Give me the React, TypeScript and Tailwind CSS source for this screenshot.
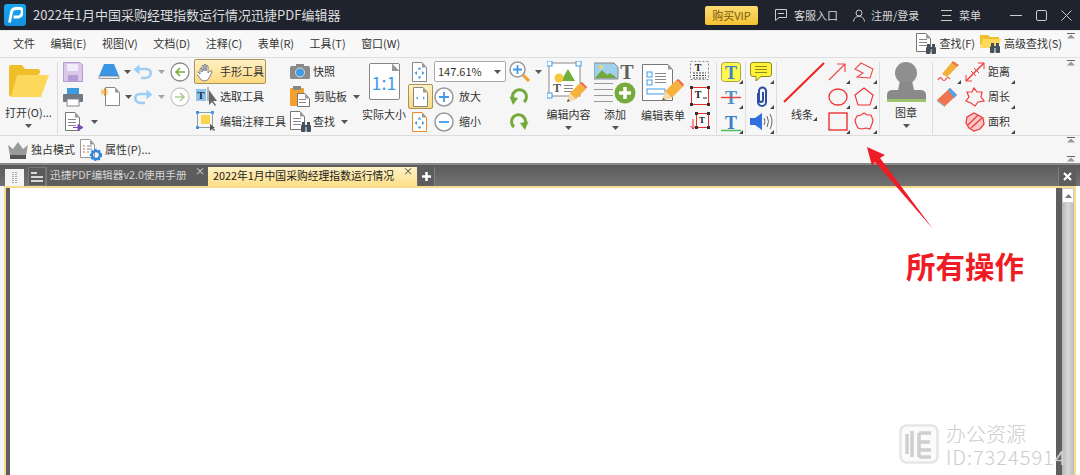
import React from "react";

const font = { fontFamily: '"Noto Sans CJK SC","Noto Sans",sans-serif' };

const Svg = ({ w, h, children, className = "" }: { w: number; h: number; children: React.ReactNode; className?: string }) => (
  <svg width={w} height={h} viewBox={`0 0 ${w} ${h}`} className={"shrink-0 " + className}>{children}</svg>
);

const Caret = ({ className = "" }: { className?: string }) => (
  <svg width="7" height="4" viewBox="0 0 7 4" className={"shrink-0 " + className}><path d="M0 0h7L3.5 4z" fill="#555" /></svg>
);
const Corner = () => (
  <svg width="4" height="4" viewBox="0 0 4 4" className="absolute right-0 bottom-0"><path d="M4 0v4H0z" fill="#444" /></svg>
);
const Sep = () => <div className="w-px h-[72px] mt-[3px] bg-[#dcdcdc] shrink-0" />;
const Row = ({ children, className = "" }: { children?: React.ReactNode; className?: string }) => (
  <div className={"h-[25px] flex items-center shrink-0 " + className}>{children}</div>
);
const Collapse = ({ className }: { className: string }) => (
  <svg width="8" height="6" viewBox="0 0 8 6" className={"absolute " + className}><path d="M0 0.5h8" stroke="#666" /><path d="M4 1.5L8 5.5H0z" fill="#999" /></svg>
);

const Pencil = ({ x, y, s = 1 }: { x: number; y: number; s?: number }) => (
  <g transform={`translate(${x} ${y}) scale(${s})`}>
    <path d="M0 20l3-9L13 1l6 6L9 17z" fill="#f7b23c" />
    <path d="M13 1l2-1 5 5-1 2z" fill="#ee6b4a" />
    <path d="M0 20l3-9 6 6z" fill="#f5d9b0" />
    <path d="M0 20l1-3 2 2z" fill="#555" />
  </g>
);
const Doc = ({ x = 0, y = 0, w = 15, h = 20, fill = "#fff", stroke = "#777" }: any) => (
  <g transform={`translate(${x} ${y})`}>
    <path d={`M.5 .5H${w - 5}L${w - .5} 5.5V${h - .5}H.5z`} fill={fill} stroke={stroke} />
    <path d={`M${w - 5} .5V5.5H${w - .5}z`} fill="#999" />
  </g>
);
const Lines = ({ x, y, n = 4, w = 9, gap = 3, c = "#888" }: any) => (
  <g>{Array.from({ length: n }).map((_, i) => <rect key={i} x={x} y={y + i * gap} width={w} height="1" fill={c} />)}</g>
);
const Binoc = ({ x, y }: { x: number; y: number }) => (
  <g transform={`translate(${x} ${y})`} fill="#44505c">
    <rect x="0" y="3" width="4.5" height="7" rx="1" /><rect x="5.5" y="3" width="4.5" height="7" rx="1" /><rect x="1" y="0" width="3" height="4" /><rect x="6" y="0" width="3" height="4" /><rect x="4" y="3" width="2" height="2" />
  </g>
);
const Circ = ({ sign, w = 20, c = "#3f9be8" }: { sign: "+" | "-"; w?: number; c?: string }) => (
  <Svg w={w} h={w}>
    <circle cx={w / 2} cy={w / 2} r={w / 2 - 1} fill="#fff" stroke="#9a9a9a" strokeWidth="1.5" />
    <path d={sign === "+" ? `M${w / 2} 5V${w - 5}M5 ${w / 2}H${w - 5}` : `M5 ${w / 2}H${w - 5}`} stroke={c} strokeWidth="1.8" />
  </Svg>
);
const ArrowCirc = ({ dir, dim }: { dir: "l" | "r"; dim?: boolean }) => (
  <Svg w={20} h={20}>
    <circle cx="10" cy="10" r="9" fill="#fff" stroke={dim ? "#c8c8c8" : "#8a8a8a"} strokeWidth="1.3" />
    <path d={dir === "l" ? "M15 10H6M10 6l-4 4 4 4" : "M5 10h9M10 6l4 4-4 4"} fill="none" stroke={dim ? "#a9cf8e" : "#6fae3c"} strokeWidth="1.6" />
  </Svg>
);
const Curve = ({ flip }: { flip?: boolean }) => (
  <Svg w={20} h={16} className={flip ? "-scale-x-100" : ""}>
    <path d="M5 5H13C20 5 19 14 12 14H8" fill="none" stroke="#9ccdf4" strokeWidth="2.6" />
    <path d="M0.5 5.5L6.5 0.5V10.5z" fill="#9ccdf4" />
  </Svg>
);
const Rotate = ({ flip }: { flip?: boolean }) => (
  <Svg w={20} h={20} className={flip ? "-scale-x-100" : ""}>
    <path d="M5 14A7 7 0 1 1 15 15" fill="none" stroke="#74aa3a" strokeWidth="3" />
    <path d="M0.5 9.5L9 11 4 18z" fill="#74aa3a" />
  </Svg>
);
const FitDoc = ({ orange, dots = 4 }: { orange?: boolean; dots?: number }) => (
  <Svg w={15} h={20}>
    <Doc w={15} h={20} stroke={orange ? "#e98a20" : "#888"} fill="#fff" />
    {dots === 2 ? <path d="M3 11l2-1.500v3zM12 11l-2-1.500v3z" fill="#3f9be8" /> : <path d="M7.500 5l-2 2.500h4zM7.500 17l-2-2.500h4zM2.500 11l2.500-2v4zM12.500 11l-2.500-2v4z" fill="#3f9be8" />}
  </Svg>
);
const TBig = ({ c = "#3a7fc8" }: { c?: string }) => (
  <text x="10" y="16.500" textAnchor="middle" fontSize="18" fontWeight="700" fontFamily="Liberation Serif, serif" fill={c}>T</text>
);
const Handle = ({ x, y, s = 3 }: any) => <rect x={x} y={y} width={s} height={s} fill="#333" />;

const T = ({ children, className = "" }: { children: React.ReactNode; className?: string }) => (
  <span className={"text-[11px] leading-none text-[#333] whitespace-nowrap " + className}>{children}</span>
);

function TitleBar() {
  return (
    <div className="h-[30px] bg-[#1f232d] flex items-center shrink-0 text-[#d8d8d8] text-[11px]">
      <div className="ml-[4px] w-[22px] h-[22px] rounded-[3px] bg-gradient-to-b from-[#16a9ee] to-[#1690e0] flex items-center justify-center">
        <Svg w={16} h={17}><path d="M2.500 15.500L4.500 5C5 2.500 6.500 1.500 9 1.500H13C15.500 1.500 15.500 4 15 6C14.500 8.500 13 10 10.500 10H6.500" fill="none" stroke="#fff" strokeWidth="2.800" /></Svg>
      </div>
      <span className="ml-[7px] text-[13px] text-[#dcdcdc] whitespace-nowrap">2022年1月中国采购经理指数运行情况迅捷PDF编辑器</span>
      <div className="ml-auto w-[53px] h-[19px] rounded-[2px] bg-gradient-to-b from-[#fbdc70] to-[#f5c22f] text-[#7a5a10] flex items-center justify-center">购买VIP</div>
      <Svg w={12} h={12} className="ml-[17px]"><path d="M.5 .5h11v8H4l-3.500 3z" fill="none" stroke="#ccc" /><path d="M3 4.500h6" stroke="#ccc" /></Svg>
      <span className="ml-[7px] w-[59px]">客服入口</span>
      <Svg w={12} h={13}><circle cx="6" cy="4" r="3" fill="none" stroke="#ccc" /><path d="M.5 12.500C1 8.500 3.500 7.500 6 7.500s5 1 5.500 5" fill="none" stroke="#ccc" /></Svg>
      <span className="ml-[6px] w-[70px]">注册/登录</span>
      <Svg w={11} h={11}><path d="M0 .5h11M1 5.500h9M0 10.500h11" stroke="#ccc" /></Svg>
      <span className="ml-[7px] w-[51px]">菜单</span>
      <Svg w={12} h={12}><path d="M0 6.500h12" stroke="#ccc" /></Svg>
      <Svg w={11} h={11} className="ml-[14px]"><rect x=".5" y=".5" width="10" height="10" rx="1.500" fill="none" stroke="#ccc" /></Svg>
      <Svg w={11} h={11} className="ml-[14px] mr-[8px]"><path d="M.5 .5l10 10M10.500 .5l-10 10" stroke="#ccc" /></Svg>
    </div>
  );
}

function MenuBar() {
  return (
    <div className="h-[28px] shrink-0 flex items-center bg-[#f8f8f8] border-b border-[#dedede] border-t border-t-[#e8e8e8] pl-[13px] pb-[2px] gap-[15.500px]">
      {["文件", "编辑(E)", "视图(V)", "文档(D)", "注释(C)", "表单(R)", "工具(T)", "窗口(W)"].map((m) => <T key={m}>{m}</T>)}
      <Svg w={20} h={21} className="ml-auto -mr-[12.500px]">
        <Doc w={15} h={19} /><Lines x={3} y={6} n={3} w={8} /><Binoc x={10} y={11} />
      </Svg>
      <T className="text-[10.500px] -mr-[10.500px]">查找(F)</T>
      <Svg w={21} h={20} className="-mr-[12.500px]">
        <path d="M0 2h8l2 2h9v8H0z" fill="#efc02c" /><path d="M0 15L3 6h18l-3 9z" fill="#fdd95b" /><Binoc x={10} y={10} />
      </Svg>
      <T className="text-[10.500px] mr-[18px]">高级查找(S)</T>
    </div>
  );
}

function Ribbon() {
  return (
    <div className="h-[78px] shrink-0 flex pt-[1px] bg-[#f6f6f6] border-b border-[#dcdcdc]">
      <div className="w-[57px] shrink-0 flex flex-col items-center">
        <Svg w={41} h={33} className="mt-[6px]">
          <path d="M1 2Q1 0 3 0H14l3 4H30q2 0 2 2V8L8 30 3 32 1 30z" fill="#efbe2a" />
          <path d="M9 10H41L33 32H3z" fill="#fdd95b" />
        </Svg>
        <T className="mt-[9px]">打开(O)...</T>
        <Caret className="mt-[6px]" />
      </div>
      <Sep />
      <div className="w-[38px] shrink-0 pl-[5px]">
        <Row><Svg w={20} h={20}><path d="M.5 .5H17L19.500 3V19.500H.5z" fill="#d9c8ea" stroke="#b79bd6" /><rect x="4" y="2" width="11" height="7" fill="#f2ecf8" /><rect x="5" y="13" width="10" height="6" fill="#b79bd6" /></Svg></Row>
        <Row><Svg w={20} h={20}><rect x="4" y="1" width="12" height="6" fill="#3d9be0" /><rect x="0" y="7" width="20" height="8" rx="1" fill="#6f7a84" /><rect x="4" y="12" width="12" height="7" fill="#fff" stroke="#888" /></Svg></Row>
        <Row className="gap-[6px] pl-[2px]">
          <Svg w={20} h={20}><Doc w={15} h={19} /><Lines x={3} y={7} n={3} w={8} /><path d="M8 15.500h8M13 12.500l5 3-5 3z" fill="#7d4bb8" stroke="#7d4bb8" /></Svg>
          <Caret />
        </Row>
      </div>
      <div className="w-[37px] shrink-0 pl-[2px]">
        <Row className="gap-[4px]"><Svg w={22} h={17}><path d="M6 1H16L21 13H1z" fill="#3b97e6" /><path d="M1 13H21V15.500H1z" fill="#e2edf7" stroke="#666" strokeWidth=".6" /></Svg><Caret /></Row>
        <Row className="gap-[5px] pl-[2px]"><Svg w={20} h={19} className=""><Doc x={5} w={15} h={19} stroke="#888" /><path d="M4.500 1v8M.5 5h8M1.500 2l6 6M7.500 2l-6 6" stroke="#f2a22c" /></Svg><Caret /></Row>
      </div>
      <div className="w-[35px] shrink-0">
        <Row className="gap-[5px]"><Curve /><Caret className="opacity-50" /></Row>
        <Row className="gap-[5px]"><Curve flip /><Caret className="opacity-50" /></Row>
      </div>
      <div className="w-[26px] shrink-0 pl-[2px]">
        <Row><ArrowCirc dir="l" /></Row>
        <Row><ArrowCirc dir="r" dim /></Row>
      </div>
      <div className="w-[94px] shrink-0">
        <Row className="w-[72px] h-[25px] -mb-[1px] rounded-[2px] border border-[#a8935a] bg-gradient-to-b from-[#fff0c4] to-[#fbd97e] pl-[2px]">
          <Svg w={18} h={20}><path d="M3 12V7q1-2 2 0v3V4q1-2 2 0v5V3q1-2 2 0v6V4q1-2 2 0v7l2-2q2-1 2 1l-3 6q-1 3-5 3-3 0-5-4l-3-4q0-2 2-1z" fill="#fff" stroke="#777" strokeWidth=".9" /></Svg>
          <T className="ml-[5px]">手形工具</T>
        </Row>
        <Row className="mt-[1px] pl-[2px]">
          <Svg w={21} h={21}><rect x="0" y="3" width="10" height="12" fill="#8ec5f0" /><text x="5" y="13" textAnchor="middle" fontSize="11" fontWeight="700" fontFamily="Liberation Serif, serif" fill="#234">T</text><path d="M12 1v14" stroke="#777" /><path d="M13 4V19l3-3 3 4 1-1-3-4h4z" fill="#666" /></Svg>
          <T className="ml-[3px]">选取工具</T>
        </Row>
        <Row className="pl-[2px]">
          <Svg w={20} h={21}><rect x="1.500" y="1.500" width="15" height="15" fill="none" stroke="#999" /><rect x="5" y="4" width="9" height="9" fill="#fbd34c" /><rect x="0" y="0" width="3" height="3" fill="#3f9be8" /><rect x="15" y="0" width="3" height="3" fill="#3f9be8" /><rect x="0" y="15" width="3" height="3" fill="#3f9be8" /><path d="M14 13v7l2-2 2 2 1-1-2-2h2z" fill="#555" /></Svg>
          <T className="ml-[4px] text-[10.800px]">编辑注释工具</T>
        </Row>
      </div>
      <div className="w-[72px] shrink-0 pl-[2px]">
        <Row><Svg w={20} h={15}><rect x="0" y="2" width="20" height="13" rx="1.500" fill="#8a8a8a" /><rect x="6" y="0" width="8" height="3" fill="#8a8a8a" /><circle cx="10" cy="8.500" r="4.500" fill="#3f9be8" stroke="#ddd" /></Svg><T className="ml-[3px]">快照</T></Row>
        <Row><Svg w={21} h={21}><rect x="0" y="2" width="14" height="18" rx="1" fill="#f59f2d" /><rect x="3" y="0" width="8" height="4" fill="#888" /><Doc x={7} y={7} w={13} h={14} /><Lines x={9} y={13} n={2} w={7} /></Svg><T className="ml-[3px]">剪贴板</T><Caret className="ml-[6px]" /></Row>
        <Row><Svg w={21} h={21}><Doc w={15} h={19} /><Lines x={3} y={7} n={3} w={8} /><Binoc x={11} y={11} /></Svg><T className="ml-[2px]">查找</T><Caret className="ml-[6px]" /></Row>
      </div>
      <div className="w-[48px] shrink-0 flex flex-col items-center">
        <div className="w-[31px] h-[37px] mt-[4px] bg-white border-[1.500px] border-[#888] rounded-[2px] relative flex items-center justify-center text-[#3f9be8] text-[18px] leading-none">
          1:1
          <div className="absolute top-[-1px] right-[-1px] w-[8px] h-[8px] bg-[#999] [clip-path:polygon(0_0,100%_100%,0_100%)]" />
        </div>
        <T className="mt-[9px]">实际大小</T>
      </div>
      <div className="w-[24px] shrink-0 pl-[2px] relative">
        <Row className="pl-[2px]"><FitDoc /></Row>
        <Row className="w-[25px] h-[25px] -ml-[2px] justify-center rounded-[2px] border border-[#a8935a] bg-gradient-to-b from-[#fff0c4] to-[#fbd97e]"><FitDoc dots={2} /></Row>
        <Row className="pl-[2px]"><FitDoc orange /></Row>
      </div>
      <div className="w-[74px] shrink-0 pl-[2px]">
        <Row>
          <div className="w-[72px] h-[21px] bg-white border border-[#aaa] rounded-[2px] flex items-center pl-[3px] pr-[4px]">
            <span className="text-[11px] text-[#333]">147.61%</span><Caret className="ml-auto" />
          </div>
        </Row>
        <Row><Circ sign="+" /><T className="ml-[5px]">放大</T></Row>
        <Row><Circ sign="-" /><T className="ml-[5px]">缩小</T></Row>
      </div>
      <div className="w-[39px] shrink-0 pl-[3px]">
        <Row className="gap-[4px]">
          <Svg w={22} h={22}><circle cx="8.500" cy="8.500" r="7.500" fill="#fff" stroke="#999" strokeWidth="1.500" /><path d="M8.500 4v9M4 8.500h9" stroke="#3f9be8" strokeWidth="1.800" /><path d="M14 14l6 6" stroke="#f2a22c" strokeWidth="3" /></Svg>
          <Caret />
        </Row>
        <Row><Rotate /></Row>
        <Row><Rotate flip /></Row>
      </div>
      <div className="w-[47px] shrink-0 flex flex-col items-center">
        <Svg w={43} h={45} className="mt-[2px]">
          <rect x="2" y="2" width="31" height="33" fill="#fff" stroke="#888" />
          <path d="M18 20l7-12 7 12z" fill="#6fae3c" transform="translate(-4 0)" /><circle cx="12" cy="17" r="4.500" fill="#f5c93e" />
          <text x="10" y="31" textAnchor="middle" fontSize="12" fontWeight="700" fontFamily="Liberation Serif, serif" fill="#555">T</text>
          <Lines x={17} y={24} n={3} w={9} gap={3} />
          <rect x="0" y="0" width="5" height="5" fill="#fff" stroke="#3f9be8" /><rect x="29" y="0" width="5" height="5" fill="#fff" stroke="#3f9be8" /><rect x="0" y="32" width="5" height="5" fill="#fff" stroke="#3f9be8" />
          <Pencil x={20} y={21} />
        </Svg>
        <T className="mt-[3px]">编辑内容</T>
        <Caret className="mt-[6px]" />
      </div>
      <div className="w-[46px] shrink-0 flex flex-col items-center">
        <Svg w={42} h={45} className="mt-[2px]">
          <path d="M0 2H20L24 6V18H0z" fill="#9fd0ec" stroke="#888" /><path d="M1 17l7-8 5 5 3-2 7 5z" fill="#74a83c" /><circle cx="7" cy="6" r="2" fill="#f5d76a" />
          <text x="33" y="18" textAnchor="middle" fontSize="20" fontWeight="700" fontFamily="Liberation Serif, serif" fill="#5f5f5f">T</text>
          <Lines x={0} y={22} n={4} w={19} gap={6} c="#999" />
          <circle cx="31" cy="32" r="10.500" fill="#74ab3b" /><path d="M31 26v12M25 32h12" stroke="#fff" strokeWidth="3.500" />
        </Svg>
        <T className="mt-[3px]">添加</T>
        <Caret className="mt-[6px]" />
      </div>
      <div className="w-[50px] shrink-0 flex flex-col items-center">
        <Svg w={43} h={39} className="mt-[5px]">
          <Doc x={0} y={0} w={31} h={37} />
          <rect x="5" y="8" width="5" height="5" fill="none" stroke="#3f9be8" /><rect x="5" y="16" width="5" height="5" fill="none" stroke="#3f9be8" /><Lines x={13} y={9} n={4} w={11} gap={3} /><rect x="5" y="25" width="18" height="5" fill="#fff" stroke="#3f9be8" />
          <Pencil x={20} y={15} s={1.100} />
        </Svg>
        <T className="mt-[7px]">编辑表单</T>
      </div>
      <div className="w-[28px] shrink-0 pl-[2px]">
        <Row><Svg w={20} h={21}><rect x=".5" y=".5" width="18" height="18" fill="none" stroke="#888" strokeDasharray="2 2" /><text x="8" y="10" textAnchor="middle" fontSize="10" fontWeight="700" fontFamily="Liberation Serif, serif" fill="#222">T</text><path d="M3 12h13M3 14.500h13M3 17h13" stroke="#444" strokeDasharray="2 1" /></Svg></Row>
        <Row><Svg w={20} h={21}><rect x="1.500" y="1.500" width="17" height="17" fill="#fff" stroke="#ee2b2b" /><text x="8" y="12" textAnchor="middle" fontSize="10" fontWeight="700" fontFamily="Liberation Serif, serif" fill="#222">T</text><path d="M13 12h4" stroke="#222" /><Handle x={0} y={0} /><Handle x={17} y={0} /><Handle x={0} y={17} /><Handle x={17} y={17} /></Svg></Row>
        <Row><Svg w={20} h={21}><rect x="6.500" y="2.500" width="12" height="14" fill="#fff" stroke="#ee2b2b" /><text x="12" y="12" textAnchor="middle" fontSize="9" fontWeight="700" fontFamily="Liberation Serif, serif" fill="#222">T</text><path d="M3 8v10M0.500 15l2.500 3 2.500-3" fill="none" stroke="#ee2b2b" /><Handle x={5} y={1} /><Handle x={17} y={1} /><Handle x={5} y={15} /><Handle x={17} y={15} /></Svg></Row>
      </div>
      <Sep />
      <div className="w-[28px] shrink-0 pl-[4px]">
        <Row className="relative w-[22px]"><Svg w={20} h={20}><rect x=".5" y=".5" width="19" height="19" rx="3" fill="#fff94f" stroke="#a8a53a" /><TBig /></Svg><Corner /></Row>
        <Row className="relative w-[22px]"><Svg w={20} h={20}><TBig c="#4f8fc8" /><path d="M0 10.500h20" stroke="#ee3b3b" strokeWidth="1.400" /></Svg><Corner /></Row>
        <Row className="relative w-[22px]"><Svg w={20} h={20}><TBig /><path d="M0 18.500h20" stroke="#4dbd5c" strokeWidth="1.500" /></Svg><Corner /></Row>
      </div>
      <Sep />
      <div className="w-[30px] shrink-0 pl-[4px]">
        <Row className="relative w-[24px]"><Svg w={22} h={20}><path d="M3 .5H19Q21.500 .5 21.500 3V12Q21.500 14.500 19 14.500H11L6 19V14.500H3Q.5 14.500 .5 12V3Q.5 .5 3 .5z" fill="#fff23a" stroke="#8d8a20" /><Lines x={5} y={4} n={3} w={12} c="#8d8a20" /></Svg><Corner /></Row>
        <Row className="relative w-[24px]"><Svg w={14} h={22} className="ml-[5px]"><path d="M3 7V16a4 4 0 0 0 8 0V5a3.500 3.500 0 0 0-7 0V14a1.500 1.500 0 0 0 4 0V6" fill="none" stroke="#2d4fa3" strokeWidth="2" /></Svg><Corner /></Row>
        <Row className="relative w-[24px]"><Svg w={23} h={19}><path d="M0 6H5L12 1V18L5 13H0z" fill="#2f6fe0" /><path d="M14 6q2 3.500 0 7M17 4q3 5.500 0 11M20 2q4 7.500 0 15" fill="none" stroke="#666" /></Svg><Corner /></Row>
      </div>
      <Sep />
      <div className="w-[50px] shrink-0 pl-[6px]">
        <Svg w={42} h={42} className="mt-[3px]"><path d="M1 40L41 1" stroke="#ee2222" strokeWidth="2" /></Svg>
        <div className="relative w-[26px] ml-[8px] mt-[3px] h-[14px] flex items-center"><T>线条</T><Corner /></div>
      </div>
      <div className="w-[24px] shrink-0 pl-[1px]">
        <Row className="relative w-[22px]"><Svg w={19} h={19}><path d="M1 18L17 2M9 2h8v8" fill="none" stroke="#ee4b4b" strokeWidth="1.200" /></Svg><Corner /></Row>
        <Row className="relative w-[22px]"><Svg w={20} h={18}><ellipse cx="10" cy="9" rx="9" ry="8" fill="none" stroke="#ee3333" strokeWidth="1.300" /></Svg><Corner /></Row>
        <Row className="relative w-[22px]"><Svg w={20} h={19}><rect x="1" y="1" width="18" height="17" fill="none" stroke="#ee2222" strokeWidth="1.300" /></Svg><Corner /></Row>
      </div>
      <div className="w-[28px] shrink-0 pl-[3px]">
        <Row className="relative w-[23px]"><Svg w={20} h={20}><path d="M7 1L19 7 16 16 3 15 9 11 1 7z" fill="none" stroke="#ee4b4b" strokeWidth="1.100" /></Svg><Corner /></Row>
        <Row className="relative w-[23px]"><Svg w={20} h={19}><path d="M10 1L19 8 16 18H4L1 8z" fill="none" stroke="#ee3333" strokeWidth="1.100" /></Svg><Corner /></Row>
        <Row className="relative w-[23px]"><Svg w={20} h={19}><path d="M10 1L13 3 17 3 19 8 18 12 16 17 12 16 8 17 4 16 2 12 1 8 3 4 7 3z" fill="none" stroke="#ee3333" strokeWidth="1.100" /></Svg><Corner /></Row>
      </div>
      <Sep />
      <div className="w-[52px] shrink-0 flex flex-col items-center">
        <Svg w={41} h={42} className="mt-[2px]">
          <circle cx="20" cy="12" r="11" fill="#8f8f8f" /><path d="M14 20h12l2 9h-16z" fill="#8a8a8a" />
          <path d="M1 39V34q0-5 6-5H34q6 0 6 5V39z" fill="#8a8a8a" /><rect x="1" y="38" width="39" height="3" fill="#9bc46b" />
        </Svg>
        <T className="mt-[4px]">图章</T>
        <Caret className="mt-[6px]" />
      </div>
      <Sep />
      <div className="w-[30px] shrink-0 pl-[4px]">
        <Row className="relative w-[24px]"><Svg w={22} h={21}><path d="M5 13L14 2l6 4-10 10z" fill="#f4b03c" /><path d="M14 2l2-2 6 4-2 2z" fill="#ee7a4a" /><path d="M1 19q2-4 4-1t4 0 4 0" fill="none" stroke="#ee3b3b" strokeWidth="1.200" /></Svg><Corner /></Row>
        <Row><Svg w={21} h={20}><path d="M0 13L13 1l7 7L8 19z" fill="#f0744f" /><path d="M11 3l2-2 7 7-3 3z" fill="#4ca4ea" /><path d="M0 13l8 6 0 1-8-6z" fill="#888" /></Svg></Row>
      </div>
      <div className="w-[52px] shrink-0 pl-[2px]">
        <Row className="relative w-[50px]"><Svg w={20} h={20}><path d="M1 19L19 1" stroke="#ee3b3b" strokeWidth="1.400" /><path d="M13 1h6v6M1 13v6h6M6 9l5 5M9 6l5 5" fill="none" stroke="#ee3b3b" /></Svg><T className="ml-[3px]">距离</T><Corner /></Row>
        <Row className="relative w-[50px]"><Svg w={20} h={20}><path d="M9 1l3 4 5 0-1 5 3 4-6 1-3 4-4-3-5-2 3-4-2-5 5 0z" fill="none" stroke="#ee3b3b" strokeWidth="1.200" /></Svg><T className="ml-[3px]">周长</T><Corner /></Row>
        <Row className="relative w-[50px]"><Svg w={20} h={20}><path d="M9 1l4 2 5 3 1 6-4 5-6 2-5-3-3-5 1-6z" fill="#f8c8c8" stroke="#ee3b3b" strokeWidth="1.300" /><path d="M3 13L13 3M6 16L17 6" stroke="#ee3b3b" strokeWidth="1.300" /></Svg><T className="ml-[3px]">面积</T><Corner /></Row>
      </div>
    </div>
  );
}

function QuickBar() {
  return (
    <div className="h-[27px] shrink-0 flex items-center bg-[#f6f6f6] pl-[8px]">
      <Svg w={20} h={18}><path d="M0 4l5 4 5-7 5 7 5-4-2 11H2z" fill="#9a9a9a" /><rect x="2" y="14" width="16" height="4" fill="#555" /></Svg>
      <T className="ml-[3px]">独占模式</T>
      <Svg w={22} h={22} className="ml-[5px]"><Doc w={15} h={19} stroke="#999" /><path d="M3 7h2M3 10h2M3 13h2" stroke="#ee5b3b" /><path d="M7 7h5M7 10h5M7 13h2" stroke="#888" /><circle cx="16" cy="16" r="4" fill="none" stroke="#2f86dc" strokeWidth="2.500" /><circle cx="16" cy="16" r="5.500" fill="none" stroke="#2f86dc" strokeWidth="1.500" strokeDasharray="2 2" /></Svg>
      <T className="ml-[3px]">属性(P)...</T>
    </div>
  );
}

function Tabs() {
  return (
    <div className="h-[23px] shrink-0 flex items-end bg-gradient-to-b from-[#5a5a5a] to-[#737373] border-t-2 border-[#8a8a8a] pl-[5px] relative">
      <div className="w-[19px] h-[17px] bg-[#f4f4f4] flex items-center justify-center">
        <Svg w={6} h={11}><path d="M1 0v11M4 0v11" stroke="#aaa" strokeWidth="2" strokeDasharray="1 1" /></Svg>
      </div>
      <div className="w-[18px] h-[19px] ml-[4px] bg-[#5a5a5a] border border-[#777] flex items-center justify-center">
        <Svg w={12} h={10}><path d="M0 1h6M0 5h12M0 9h12" stroke="#fff" strokeWidth="1.500" /></Svg>
      </div>
      <div className="w-[162px] h-[19px] bg-[#5d5d5d] border-l border-[#777] flex items-center pl-[3px] pb-[3px] text-[10.700px] text-[#d4d4d4] relative whitespace-nowrap">
        迅捷PDF编辑器v2.0使用手册
        <span className="absolute right-[3px] top-[-1px] text-[10px] leading-none text-[#ddd]">×</span>
      </div>
      <div className="w-[209px] h-[19px] bg-gradient-to-b from-[#fff2c6] to-[#fcdf86] flex items-center pl-[5px] pb-[3px] text-[10.800px] text-[#222] relative whitespace-nowrap">
        2022年1月中国采购经理指数运行情况
        <span className="absolute right-[4px] top-[-1px] text-[10px] leading-none text-[#444]">×</span>
      </div>
      <div className="w-[17px] h-[19px] ml-px bg-[#5d5d5d] border-r border-[#808080] flex items-center justify-center">
        <Svg w={9} h={9}><path d="M4.500 0v9M0 4.500h9" stroke="#fff" strokeWidth="2.500" /></Svg>
      </div>
      <div className="ml-auto w-[18px] h-[19px] mr-[4px] bg-[#5d5d5d] border-l border-[#808080] flex items-center justify-center">
        <Svg w={9} h={9}><path d="M1 1l7 7M8 1l-7 7" stroke="#fff" strokeWidth="2.200" /></Svg>
      </div>
    </div>
  );
}

function PageArea() {
  return (
    <div className="flex-1 min-h-0 flex bg-[#f6f6f6]">
      <div className="w-[4px] shrink-0" />
      <div className="flex-1 min-w-0 flex border-t-2 border-x-2 border-[#f6dc8c]">
        <div className="w-[4px] shrink-0 bg-[#5e5e5e]" />
        <div className="flex-1 min-w-0 bg-white" />
        <div className="w-[6px] shrink-0 bg-[#5e5e5e]" />
        <div className="w-[12px] shrink-0 bg-gradient-to-r from-[#b5b5b5] via-[#d8d8d8] to-[#bcbcbc] flex flex-col">
          <div className="h-[15px] bg-white border border-[#ccc] flex items-center justify-center"><Svg w={7} h={4}><path d="M0 4L3.500 0 7 4z" fill="#777" /></Svg></div>
        </div>
      </div>
      <div className="w-[4px] shrink-0 bg-white" />
    </div>
  );
}

export default function App() {
  return (
    <div className="w-[1080px] h-[475px] relative overflow-hidden flex flex-col bg-[#f6f6f6]" style={font}>
      <TitleBar />
      <MenuBar />
      <Ribbon />
      <QuickBar />
      <Tabs />
      <PageArea />
      <Collapse className="left-[1067px] top-[33px]" />
      <Collapse className="left-[1067px] top-[60px]" />
      <Collapse className="left-[1067px] top-[137px]" />
      <Collapse className="left-[1067px] top-[156px]" />
      <svg width="80" height="90" viewBox="860 145 80 90" className="absolute left-[860px] top-[145px]">
        <path d="M867 147L885 155 880 158 933 229 875 162 872 166z" fill="#ee1c25" />
      </svg>
      <div className="absolute left-[906px] top-[244px] text-[29.500px] leading-[42px] font-bold text-[#ee1c25] whitespace-nowrap">所有操作</div>
      <svg width="40" height="40" viewBox="0 0 40 40" className="absolute left-[899px] top-[424px]">
        <rect x="1.500" y="1.500" width="37" height="37" rx="6" fill="#fbfbfb" stroke="#e6e6e6" strokeWidth="2.500" />
        <path d="M8 10v20M13 7v26M20 9h12M20 9v24M20 18h11M20 26h12M20 33h12" stroke="#cfcfcf" strokeWidth="3.500" fill="none" />
      </svg>
      <div className="absolute left-[946px] top-[423px] text-[20px] leading-[22px] text-[#cdcdcd] font-light whitespace-nowrap">办公资源</div>
      <div className="absolute left-[946px] top-[446px] text-[20px] leading-[22px] text-[#cdcdcd] font-light tracking-[1px] whitespace-nowrap [text-shadow:0_0_1px_#fff]">ID:73245914</div>
    </div>
  );
}
